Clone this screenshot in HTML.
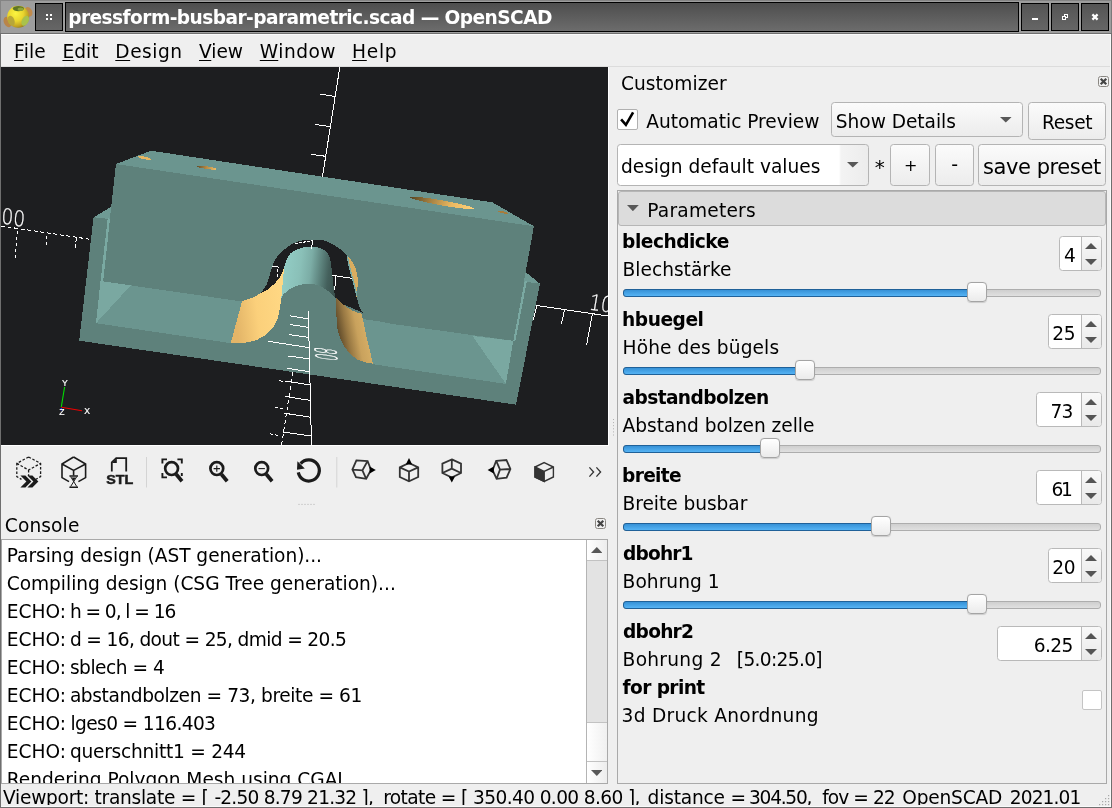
<!DOCTYPE html>
<html lang="de"><head><meta charset="utf-8"><title>pressform-busbar-parametric.scad — OpenSCAD</title>
<style>
*{box-sizing:border-box;margin:0;padding:0}
html,body{width:1112px;height:808px;overflow:hidden;background:#efefef}
body{font-family:"DejaVu Sans","Liberation Sans",sans-serif;font-size:18.6px;color:#000}
#w{position:relative;width:1112px;height:808px;overflow:hidden;background:#efefef}
#w div,#w svg{position:absolute}
.t{white-space:pre;line-height:28px;height:28px}
.t u{text-decoration-thickness:1.4px;text-underline-offset:2.2px}
.gl{left:1px;top:67px}
.tx{left:0;top:0;width:1112px;height:808px;will-change:transform}
.tx2{will-change:transform}
.tb{left:0;top:0;width:1112px;height:34px;background:#9e9e9e;border-top:1px solid #848484;border-left:1px solid #848484;border-right:1px solid #7a7a7a;border-bottom:1.4px solid #707070}
.wb{border:1px solid #000;background:linear-gradient(#545454,#666)}
.btn{border:1px solid #b4b4b4;border-radius:3.5px;background:linear-gradient(#fbfbfb,#ececec)}
.sp{border:1px solid #b9b9b9;border-radius:3.5px;background:#fff;height:35.2px}
.sp i{position:absolute;right:0;top:0;bottom:0;width:20.2px;border-left:1px solid #b9b9b9;background:linear-gradient(#f9f9f9,#e9e9e9);border-radius:0 3px 3px 0}
.sp i:before,.sp i:after{content:"";position:absolute;left:3.1px;border:6.5px solid transparent}
.sp i:before{top:6.1px;border-bottom:6.5px solid #555;border-top-width:0}
.sp i:after{bottom:5.1px;border-top:6.5px solid #555;border-bottom-width:0}
.gr{height:7.6px;border:1px solid #adadad;border-radius:3px;background:linear-gradient(#cfcfcf,#e0e0e0)}
.gb{height:7.8px;border:1px solid #1f6199;border-radius:3px;background:linear-gradient(#3691d6,#55b3f4)}
.hd{width:20px;height:20px;border:1px solid #a4a4a4;border-radius:4px;background:linear-gradient(#fff,#ebebeb);box-shadow:0 .5px 1px rgba(0,0,0,.15)}
.cl{width:11px;height:11px;border:1px solid #8a8782;border-radius:2.5px;background:#f1f1f1}
</style></head>
<body><div id="w">
<div class="tb"></div><svg style="left:3px;top:3px" width="31" height="28" viewBox="3 3 31 28"><defs><radialGradient id="ig" cx=".38" cy=".35" r=".7"><stop offset="0" stop-color="#fbf440"/><stop offset=".5" stop-color="#ead62e"/><stop offset=".85" stop-color="#bfa022"/><stop offset="1" stop-color="#8c7a1a"/></radialGradient></defs><ellipse cx="28.6" cy="11.8" rx="3.6" ry="5" transform="rotate(-25 28.6 11.8)" fill="#c08a4c"/><ellipse cx="7.6" cy="22" rx="3.7" ry="5.4" transform="rotate(-25 7.6 22)" fill="#b98548"/><circle cx="18.2" cy="16.8" r="11" fill="url(#ig)"/><ellipse cx="18.4" cy="8.6" rx="5.6" ry="2.7" fill="#5f7524"/><ellipse cx="20.6" cy="9.2" rx="3" ry="1.7" fill="#8ea53a"/><ellipse cx="25.2" cy="20.8" rx="3.3" ry="5.4" transform="rotate(28 25.2 20.8)" fill="#a9c24c"/><ellipse cx="11.2" cy="20.8" rx="3.3" ry="5.2" transform="rotate(-20 11.2 20.8)" fill="#b7a63a"/></svg><div class="wb" style="left:35px;top:3px;width:28px;height:28px"></div><div style="left:46px;top:14px;width:2px;height:2px;background:#fff"></div><div style="left:50px;top:14px;width:2px;height:2px;background:#fff"></div><div style="left:46px;top:18px;width:2px;height:2px;background:#fff"></div><div style="left:50px;top:18px;width:2px;height:2px;background:#fff"></div><div class="wb" style="left:65px;top:2px;width:954px;height:30px;background:linear-gradient(#4e4e4e,#6c6c6c)"></div><div class="wb" style="left:1021px;top:3px;width:28px;height:28px"></div><div class="wb" style="left:1051px;top:3px;width:28px;height:28px"></div><div class="wb" style="left:1081px;top:3px;width:28px;height:28px"></div><div style="left:1032px;top:18px;width:6px;height:2px;background:#fff"></div><svg style="left:1061px;top:13px" width="8" height="8" viewBox="0 0 8 8" shape-rendering="crispEdges"><rect x="3.5" y="1.5" width="3" height="3" fill="none" stroke="#fff" stroke-width="1"/><rect x="1.5" y="3.5" width="3" height="3" fill="#5d5d5d" stroke="#fff" stroke-width="1"/></svg><svg style="left:1091px;top:13px" width="8" height="8" viewBox="0 0 8 8"><path d="M1.4 1.4L6.6 6.6M6.6 1.4L1.4 6.6" stroke="#fff" stroke-width="2.2"/></svg>
<div style="left:1px;top:66px;width:1110px;height:1px;background:#dcdcdc"></div>
<div style="left:0;top:66.5px;width:609px;height:379px;background:#fff"></div>
<svg class="gl" viewBox="1 67 607 377.5" width="607" height="377.5" shape-rendering="crispEdges">
<defs><linearGradient id="gy" x1="236" y1="322" x2="285" y2="316" gradientUnits="userSpaceOnUse"><stop offset="0" stop-color="#e3b568"/><stop offset=".45" stop-color="#fbd07b"/><stop offset="1" stop-color="#ffd884"/></linearGradient><linearGradient id="gc" x1="284" y1="270" x2="336" y2="276" gradientUnits="userSpaceOnUse"><stop offset="0" stop-color="#92ccc4"/><stop offset=".3" stop-color="#8ac0b8"/><stop offset=".5" stop-color="#7cada6"/><stop offset=".68" stop-color="#5f8680"/><stop offset=".85" stop-color="#44605c"/><stop offset="1" stop-color="#3a524e"/></linearGradient><linearGradient id="gb" x1="337" y1="330" x2="368" y2="324" gradientUnits="userSpaceOnUse"><stop offset="0" stop-color="#5c4829"/><stop offset=".3" stop-color="#987843"/><stop offset=".62" stop-color="#c9a25d"/><stop offset="1" stop-color="#d8b067"/></linearGradient><linearGradient id="gh" x1="410" y1="197" x2="474" y2="208" gradientUnits="userSpaceOnUse"><stop offset="0" stop-color="#54421f"/><stop offset=".3" stop-color="#a07c3f"/><stop offset=".65" stop-color="#eab962"/><stop offset="1" stop-color="#ffd27a"/></linearGradient><linearGradient id="gh2" x1="196" y1="166" x2="217" y2="169" gradientUnits="userSpaceOnUse"><stop offset="0" stop-color="#5a4522"/><stop offset=".5" stop-color="#b58b46"/><stop offset="1" stop-color="#f2c068"/></linearGradient></defs>
<rect x="0" y="60" width="620" height="400" fill="#1d1e20"/>
<polygon fill="#5e817b" points="93.6,216.9 110.0,218.3 525.0,281.3 539.9,283.7 516.0,404.7 79.2,340.7"/>
<polygon fill="#6f9a94" points="93.6,217.3 111.6,206.6 114.0,214.0 112.0,219.2 108.0,218.8"/>
<polygon fill="#6f9a94" points="526.3,272.6 539.9,283.7 524.6,281.6 518.0,281.0 520.0,272.0"/>
<polygon fill="#6b958f" points="100.5,281.0 513.3,340.8 505.9,383.9 96.0,323.2"/>
<polygon fill="#7aa8a1" points="100.5,281.0 130.9,285.3 96.0,323.2"/>
<polygon fill="#7aa8a1" points="472.5,336.0 513.3,340.8 505.9,383.9"/>
<polygon fill="#6b958f" points="116.0,164.0 151.0,150.7 492.5,202.4 533.9,226.3"/>
<ellipse cx="442" cy="202.9" rx="32.6" ry="2.5" transform="rotate(10.1 442 202.9)" fill="url(#gh)"/>
<ellipse cx="144.5" cy="158" rx="6.5" ry="1.3" transform="rotate(12 144.5 158)" fill="#e9b862"/>
<ellipse cx="206.5" cy="167.6" rx="10" ry="1.4" transform="rotate(9 206.5 167.6)" fill="url(#gh2)"/>
<ellipse cx="502.8" cy="212.2" rx="5.3" ry="1" transform="rotate(14 502.8 212.2)" fill="#a67c3c"/>
<polygon fill="#1d1e20" points="259.1,294.0 260.8,292.5 262.3,290.9 263.6,289.2 264.8,287.6 265.7,286.2 266.4,285.0 267.0,283.6 267.7,281.9 268.4,279.7 269.1,277.1 269.8,274.5 270.5,272.0 271.2,269.7 271.9,267.5 272.6,265.4 273.4,263.4 274.3,261.5 275.2,259.8 276.3,258.0 277.6,256.3 279.1,254.5 280.9,252.7 282.8,250.9 284.7,249.2 286.7,247.6 288.7,246.1 290.9,244.7 293.3,243.5 296.0,242.4 298.8,241.4 301.8,240.6 304.7,240.0 307.6,239.6 310.5,239.5 313.3,239.5 316.0,239.6 318.5,239.7 320.8,240.0 323.0,240.3 325.0,240.7 326.7,241.2 328.1,241.8 329.4,242.5 331.1,243.4 333.2,244.6 335.5,245.9 337.9,247.4 340.0,248.9 341.9,250.4 343.6,251.9 345.2,253.4 346.7,255.0 348.2,256.6 349.7,258.3 351.1,260.0 352.3,261.7 353.3,263.3 354.2,264.9 354.9,266.6 355.6,268.4 356.2,270.5 356.8,272.8 357.2,275.2 357.6,277.3 357.8,279.2 357.9,280.9 357.9,282.5 357.9,284.0 357.8,285.3 357.6,286.4 357.5,287.4 357.3,288.5 357.2,289.5 357.0,290.5 356.9,291.6 356.9,293.0 357.0,294.9 357.2,297.3 357.5,299.6 357.9,301.8 358.3,303.7 358.9,305.4 359.4,307.0 360.1,308.5 360.8,309.8 361.5,310.9 362.3,311.9 363.4,313.0 340.0,303.0 300.0,290.0"/>
<polygon fill="url(#gy)" points="242.1,301.1 250.6,298.3 259.1,294.0 267.7,289.8 274.8,283.4 280.5,276.3 284.0,268.4 282.6,284.8 281.2,299.0 279.8,309.0 277.6,318.9 273.4,327.5 266.3,334.6 256.3,340.3 243.5,343.1 230.7,343.4"/>
<polygon fill="url(#gc)" points="284.0,268.4 284.5,266.4 285.2,263.4 286.2,260.6 287.3,258.1 288.7,255.6 290.4,253.5 292.4,251.8 294.8,250.4 297.5,249.2 300.7,248.1 304.2,247.3 307.5,246.7 310.6,246.6 313.5,246.8 316.0,247.1 318.0,247.5 319.5,248.0 321.0,248.6 322.4,249.1 323.7,249.7 325.0,250.6 326.3,251.8 327.5,253.3 328.6,255.0 329.4,256.6 330.0,258.3 330.6,261.0 331.2,265.1 331.7,270.1 332.2,275.0 332.8,279.7 333.3,284.3 333.9,288.5 334.5,292.5 335.2,296.0 335.6,298.5 335.6,298.5 334.7,297.4 333.4,295.9 332.0,294.4 330.8,293.2 329.5,292.1 328.0,290.9 326.2,289.6 324.0,288.2 321.7,286.9 319.0,285.8 316.1,284.8 313.2,284.1 310.4,283.8 307.5,283.8 304.7,284.1 301.8,284.6 298.9,285.3 296.1,286.2 293.6,287.2 291.2,288.4 289.0,289.8 286.9,291.4 284.9,293.1 283.3,294.7 282.3,296.3 281.6,297.9 281.2,299.0"/>
<polygon fill="url(#gb)" points="335.5,296.9 339.0,300.8 343.0,304.3 348.0,308.0 353.3,311.0 357.5,312.5 361.2,313.2 363.5,322.0 365.7,333.2 369.7,350.0 373.0,363.7 365.0,362.3 358.2,360.0 352.5,356.0 347.8,351.0 343.6,345.5 340.4,339.2 338.0,331.5 336.7,324.3 336.2,304.3"/>
<polygon fill="#5e817b" points="230.7,343.4 243.5,343.1 256.3,340.3 266.3,334.6 273.4,327.5 277.6,318.9 279.8,309.0 281.2,299.0 281.6,297.9 282.3,296.3 283.3,294.7 284.9,293.1 286.9,291.4 289.0,289.8 291.2,288.4 293.6,287.2 296.1,286.2 298.9,285.3 301.8,284.6 304.7,284.1 307.5,283.8 310.4,283.8 313.2,284.1 316.1,284.8 319.0,285.8 321.7,286.9 324.0,288.2 326.2,289.6 328.0,290.9 329.5,292.1 330.8,293.2 332.0,294.4 333.4,295.9 334.7,297.4 335.6,298.5 336.2,304.3 336.7,324.3 338.0,331.5 340.4,339.2 343.6,345.5 347.8,351.0 352.5,356.0 358.2,360.0 365.0,362.3 373.0,363.7 373.0,375.0 230.0,352.0"/>
<polygon fill="#d9ad60" points="346.7,254.5 353.0,261.7 356.6,268.4 358.6,277.3 358.9,284.0 358.3,288.5 357.5,297.0 356.7,297.4 354.5,288.5 352.3,279.5 349.2,268.4"/>
<polyline fill="none" stroke="#78a9a2" stroke-width="1.4" points="347.2,256.0 349.8,268.4 352.9,279.5 355.1,288.5 357.0,296.0"/>
<polygon fill="#5e817b" points="116.0,164.0 533.9,226.3 513.3,340.8 390.0,323.6 388.2,323.2 385.6,322.7 382.7,322.0 380.0,321.3 377.4,320.4 374.8,319.5 372.3,318.4 370.0,317.4 368.0,316.3 366.3,315.2 364.7,314.1 363.4,313.0 362.3,311.9 361.5,310.9 360.8,309.8 360.1,308.5 359.4,307.0 358.9,305.4 358.3,303.7 357.9,301.8 357.5,299.6 357.2,297.3 357.0,294.9 356.9,293.0 356.9,291.6 357.0,290.5 357.2,289.5 357.3,288.5 357.5,287.4 357.6,286.4 357.8,285.3 357.9,284.0 357.9,282.5 357.9,280.9 357.8,279.2 357.6,277.3 357.2,275.2 356.8,272.8 356.2,270.5 355.6,268.4 354.9,266.6 354.2,264.9 353.3,263.3 352.3,261.7 351.1,260.0 349.7,258.3 348.2,256.6 346.7,255.0 345.2,253.4 343.6,251.9 341.9,250.4 340.0,248.9 337.9,247.4 335.5,245.9 333.2,244.6 331.1,243.4 329.4,242.5 328.1,241.8 326.7,241.2 325.0,240.7 323.0,240.3 320.8,240.0 318.5,239.7 316.0,239.6 313.3,239.5 310.5,239.5 307.6,239.6 304.7,240.0 301.8,240.6 298.8,241.4 296.0,242.4 293.3,243.5 290.9,244.7 288.7,246.1 286.7,247.6 284.7,249.2 282.8,250.9 280.9,252.7 279.1,254.5 277.6,256.3 276.3,258.0 275.2,259.8 274.3,261.5 273.4,263.4 272.6,265.4 271.9,267.5 271.2,269.7 270.5,272.0 269.8,274.5 269.1,277.1 268.4,279.7 267.7,281.9 267.0,283.6 266.4,285.0 265.7,286.2 264.8,287.6 263.6,289.2 262.3,290.9 260.8,292.5 259.1,294.0 257.2,295.3 255.0,296.4 252.8,297.4 250.6,298.3 248.3,299.2 245.8,300.0 243.6,300.6 242.1,301.1 103.0,281.0"/>
<polygon fill="#7aa9a2" points="107.7,218.4 110.0,218.7 103.2,281.2 100.6,281.0"/>
<polygon fill="#7aa9a2" points="524.6,281.2 526.8,281.4 515.4,341.0 513.3,340.8"/>
<line x1="340.0" y1="66.0" x2="322.4" y2="177.0" stroke="#fff" stroke-width="1" fill="none" />
<line x1="319.7" y1="93.9" x2="335.0" y2="96.5" stroke="#fff" stroke-width="1" fill="none" />
<line x1="315.0" y1="124.4" x2="330.4" y2="126.7" stroke="#fff" stroke-width="1" fill="none" />
<line x1="310.8" y1="154.4" x2="325.8" y2="156.3" stroke="#fff" stroke-width="1" fill="none" />
<line x1="295.4" y1="243.6" x2="312.5" y2="240.6" stroke="#fff" stroke-width="1" fill="none" stroke-dasharray="2.5 1.5"/>
<line x1="312.6" y1="240.2" x2="311.5" y2="249.4" stroke="#fff" stroke-width="1" fill="none" />
<line x1="272.3" y1="266.3" x2="279.3" y2="267.2" stroke="#fff" stroke-width="1" fill="none" />
<line x1="277.6" y1="268.6" x2="277.2" y2="279.2" stroke="#fff" stroke-width="1" fill="none" stroke-dasharray="3 2"/>
<line x1="332.5" y1="275.3" x2="351.6" y2="278.3" stroke="#fff" stroke-width="1" fill="none" />
<line x1="335.6" y1="276.0" x2="334.8" y2="289.6" stroke="#fff" stroke-width="1" fill="none" />
<line x1="308.3" y1="311.0" x2="311.5" y2="445.0" stroke="#fff" stroke-width="1" fill="none" />
<line x1="290.2" y1="315.9" x2="308.3" y2="318.9" stroke="#fff" stroke-width="1" fill="none" />
<line x1="290.2" y1="324.5" x2="308.6" y2="327.4" stroke="#fff" stroke-width="1" fill="none" />
<line x1="289.1" y1="334.6" x2="308.8" y2="337.4" stroke="#fff" stroke-width="1" fill="none" />
<line x1="268.2" y1="341.3" x2="309.2" y2="347.6" stroke="#fff" stroke-width="1" fill="none" />
<line x1="288.0" y1="356.0" x2="309.2" y2="358.8" stroke="#fff" stroke-width="1" fill="none" />
<line x1="287.2" y1="368.2" x2="309.5" y2="371.8" stroke="#fff" stroke-width="1" fill="none" />
<line x1="285.4" y1="381.2" x2="309.8" y2="384.8" stroke="#fff" stroke-width="1" fill="none" />
<line x1="285.4" y1="396.4" x2="310.1" y2="400.4" stroke="#fff" stroke-width="1" fill="none" />
<line x1="284.2" y1="413.2" x2="310.6" y2="417.2" stroke="#fff" stroke-width="1" fill="none" />
<line x1="282.7" y1="431.9" x2="311.0" y2="436.0" stroke="#fff" stroke-width="1" fill="none" />
<line x1="292.8" y1="372.0" x2="281.6" y2="445.0" stroke="#fff" stroke-width="1" fill="none" stroke-dasharray="4 3"/>
<line x1="279.0" y1="380.3" x2="282.5" y2="381.6" stroke="#fff" stroke-width="1" fill="none" />
<line x1="275.2" y1="407.6" x2="283.6" y2="408.8" stroke="#fff" stroke-width="1" fill="none" stroke-dasharray="3 2"/>
<line x1="270.0" y1="433.8" x2="279.0" y2="435.6" stroke="#fff" stroke-width="1" fill="none" stroke-dasharray="3 2"/>
<line x1="1.0" y1="226.0" x2="89.5" y2="239.2" stroke="#fff" stroke-width="1" fill="none" stroke-dasharray="4 2.6"/>
<line x1="17.4" y1="231.0" x2="15.2" y2="258.0" stroke="#fff" stroke-width="1" fill="none" stroke-dasharray="3.4 2.6"/>
<line x1="47.0" y1="235.6" x2="46.0" y2="245.6" stroke="#fff" stroke-width="1" fill="none" stroke-dasharray="3.4 2.6"/>
<line x1="76.2" y1="238.4" x2="75.4" y2="249.4" stroke="#fff" stroke-width="1" fill="none" stroke-dasharray="3.4 2.6"/>
<line x1="536.9" y1="305.5" x2="608.0" y2="316.0" stroke="#fff" stroke-width="1" fill="none" />
<line x1="536.9" y1="305.5" x2="533.2" y2="320.0" stroke="#fff" stroke-width="1" fill="none" />
<line x1="564.6" y1="309.8" x2="561.4" y2="324.0" stroke="#fff" stroke-width="1" fill="none" />
<line x1="592.4" y1="314.0" x2="586.6" y2="345.0" stroke="#fff" stroke-width="1" fill="none" />
<g shape-rendering="auto"><line x1="61.3" y1="407" x2="64.6" y2="387" stroke="#00e000" stroke-width="1.1"/><line x1="61.3" y1="407.2" x2="82" y2="410.8" stroke="#f00000" stroke-width="1.1"/><rect x="60.6" y="408" width="1.4" height="2.4" fill="#1030ff"/></g>
</svg>
<svg class="gl tx2" viewBox="1 67 607 377.5" width="607" height="377.5"><g font-family="'DejaVu Sans Light','DejaVu Sans',sans-serif" font-weight="200" fill="#fff" stroke="#fff" stroke-width=".25"><text x="0" y="0" font-size="21.4" transform="matrix(0.93 0.14 -0.08 1 -10.8 221.6)" textLength="38" lengthAdjust="spacingAndGlyphs">100</text><text x="0" y="0" font-size="21.4" transform="matrix(0.93 0.12 -0.17 1 588.2 309.6)" textLength="25" lengthAdjust="spacingAndGlyphs">10</text><text x="0" y="0" font-size="15" transform="matrix(0.15 1 -2 -0.275 314.2 346.4)" textLength="12" lengthAdjust="spacingAndGlyphs">80</text></g><g font-family="'Liberation Sans',sans-serif" font-size="8.6" fill="#fff" stroke="#fff" stroke-width=".2"><text x="62" y="386.2">Y</text><text x="84.2" y="414.2">X</text><text x="59.2" y="415">Z</text></g></svg>
<svg class="tx2" style="left:0;top:445px" width="610" height="60" viewBox="0 445 610 60" fill="none" stroke="#1b1b1b" stroke-linecap="butt" stroke-linejoin="miter"><path d="M28.6 457L40.6 463.4V476.6L35 479.8M28.6 457L16.8 463.4V476.6L21.5 479.4M16.8 463.4L28.6 470L40.6 463.4M28.6 470V476" stroke-width="1.3" stroke-dasharray="2.6 1.7"/><path d="M20.4 475.6h5l6 6-6 6h-5l6-6zM27.4 475.6h5l6 6-6 6h-5l6-6z" fill="#1b1b1b" stroke="none"/><path d="M73.6 457L85.6 464V477.6L78.4 481.6M73.6 457L62 464V477.6L69 481.6M62 464L73.6 470.4L85.6 464M73.6 470.4V475.4" stroke-width="1.6"/><path d="M69.4 476h8.6M69.4 487.2h8.6" stroke-width="1.5"/><path d="M70.6 476.6L76.8 486.6M76.8 476.6L70.6 486.6" stroke-width="1"/><path d="M71.6 477.6h4.2l-2.1 3.4z" fill="#1b1b1b" stroke="none"/><path d="M111.8 471.4V462.4L116.2 458.2H126.2V471.4" stroke-width="1.8"/><path d="M116.8 458.6V463h-4.6z" fill="#1b1b1b" stroke="none"/><text x="106.2" y="484.3" font-family="'Liberation Sans','DejaVu Sans',sans-serif" font-weight="700" font-size="12.4" fill="#1b1b1b" stroke="#1b1b1b" stroke-width=".5" textLength="27" lengthAdjust="spacingAndGlyphs">STL</text><path d="M146.5 457V487.5" stroke="#d4d4d4" stroke-width="1"/><path d="M162.4 463.4V459.4H167M177.4 459.4H181.8V463.4M162.4 473V477.4H167M181.8 473V476" stroke-width="1.9"/><circle cx="171.6" cy="468.6" r="6.4" stroke-width="2.7"/><path d="M176.2 474.2L182.0 481.2" stroke-width="3.7"/><circle cx="216.8" cy="468.6" r="6.4" stroke-width="2.7"/><path d="M221.4 474.2L227.2 481.2" stroke-width="3.7"/><path d="M213.6 468.6h6.4M216.8 465.4v6.4" stroke-width="1.1"/><circle cx="261.7" cy="468.6" r="6.4" stroke-width="2.7"/><path d="M266.3 474.2L272.1 481.2" stroke-width="3.7"/><path d="M258.5 468.6h6.4" stroke-width="1.1"/><path d="M300.6 463.6A10.6 10.6 0 1 1 298.3 472.4" stroke-width="3.2"/><path d="M297.4 461.2L304.8 468.6L297 469.8z" fill="#1b1b1b" stroke="none"/><path d="M336.8 457V487.5" stroke="#d4d4d4" stroke-width="1"/><g stroke="#333" stroke-width="1.8"><path d="M356.4 460.4L367.6 461L371 470L366.2 478.8L356 477.2L352.4 469.6zM352.4 469.6L362.4 470.4L367.6 461M362.4 470.4L366.2 478.8"/><path d="M369.6 466.6L375.8 470L369.6 473.4z" fill="#000" stroke="none"/></g><g stroke="#333" stroke-width="1.8"><path d="M409 463L418.2 467.4V477L409 481.2L399.8 477V467.4zM399.8 467.4L409 471.6L418.2 467.4M409 471.6V481.2"/><path d="M405.8 464.4L409 458L412.2 464.4z" fill="#000" stroke="none"/></g><g stroke="#333" stroke-width="1.8"><path d="M451.8 459.4L461 463.6V473L451.8 477.6L442.4 473V463.6zM451.8 459.4V468.6L442.4 473M451.8 468.6L461 473"/><path d="M448.6 476.4L451.8 482.4L455 476.4z" fill="#000" stroke="none"/></g><g stroke="#333" stroke-width="1.8"><path d="M496.2 460.8L506.4 460L510.4 469L506.6 477.6L496.6 478.8L492.6 470.2zM496.2 460.8L500 469.6L510.4 469M500 469.6L496.6 478.8"/><path d="M493.8 466.6L487.6 470L493.8 473.4z" fill="#000" stroke="none"/></g><g stroke="#333" stroke-width="1.4"><path d="M544.2 462.6L553.4 467V477L544.2 481.4L535 477V467z"/><path d="M535 467L544.2 471.4V481.4L535 477z" fill="#333"/><path d="M544.2 471.4L553.4 467"/></g><path d="M589.4 467.4L593.6 472L589.4 476.6M596.4 467.4L600.6 472L596.4 476.6" stroke="#333" stroke-width="1.3"/><path d="M298.5 504.4H315" stroke="#b0b0b0" stroke-width="1" stroke-dasharray="1 2"/></svg>
<svg style="left:612px;top:417px" width="3" height="20"><path d="M1.5 2V20" stroke="#b0b0b0" stroke-width="1" stroke-dasharray="1 2.1"/></svg>
<div class="cl" style="left:595.0px;top:518.0px"><svg style="left:0;top:0" width="9" height="9" viewBox="0 0 9 9"><path d="M1.7 1.7L7.3 7.3M7.3 1.7L1.7 7.3" stroke="#454545" stroke-width="2.2" fill="none"/></svg></div>
<div style="left:1px;top:539px;width:607px;height:245px;border:1px solid #a9a9a9;background:#fff"></div>
<div style="left:586.4px;top:540px;width:20.6px;height:243px;border-left:1px solid #b4b4b4;background:#e3e3e3"></div>
<div style="left:587.4px;top:540px;width:19.6px;height:20.6px;border-bottom:1px solid #c2c2c2;background:linear-gradient(90deg,#fff,#ededed)"></div>
<div style="left:587.4px;top:721.5px;width:19.6px;height:40.5px;border-top:1px solid #c2c2c2;border-bottom:1px solid #c2c2c2;background:linear-gradient(90deg,#fff,#f0f0f0)"></div>
<div style="left:587.4px;top:762px;width:19.6px;height:21px;background:linear-gradient(90deg,#fff,#ededed)"></div>
<svg style="left:590.8px;top:546.8px" width="11.6" height="6.0" viewBox="0 0 11.6 6.0"><polygon points="0,6.0 11.6,6.0 5.8,0" fill="#585858"/></svg>
<svg style="left:590.7px;top:769.5px" width="11.6" height="6.0" viewBox="0 0 11.6 6.0"><polygon points="0,0 11.6,0 5.8,6.0" fill="#585858"/></svg>
<div class="tx" style="clip-path:inset(540px 526px 25px 2px)"><div class="t" style="left:6.70px;top:542px;letter-spacing:-0.036px;">Parsing design (AST generation)...</div><div class="t" style="left:6.70px;top:570px;letter-spacing:-0.022px;">Compiling design (CSG Tree generation)...</div><div class="t" style="left:6.70px;top:598px;letter-spacing:-0.005px;">ECHO:</div><div class="t" style="left:69.90px;top:598px;letter-spacing:-1.053px;">h = 0, l = 16</div><div class="t" style="left:6.70px;top:626px;letter-spacing:-0.005px;">ECHO:</div><div class="t" style="left:69.90px;top:626px;letter-spacing:-0.640px;">d = 16, dout = 25, dmid = 20.5</div><div class="t" style="left:6.70px;top:654px;letter-spacing:-0.005px;">ECHO:</div><div class="t" style="left:69.90px;top:654px;letter-spacing:-0.489px;">sblech = 4</div><div class="t" style="left:6.70px;top:682px;letter-spacing:-0.005px;">ECHO:</div><div class="t" style="left:69.90px;top:682px;letter-spacing:-0.412px;">abstandbolzen = 73, breite = 61</div><div class="t" style="left:6.70px;top:710px;letter-spacing:-0.005px;">ECHO:</div><div class="t" style="left:70.60px;top:710px;letter-spacing:-0.635px;">lges0 = 116.403</div><div class="t" style="left:6.70px;top:738px;letter-spacing:-0.005px;">ECHO:</div><div class="t" style="left:69.90px;top:738px;letter-spacing:-0.258px;">querschnitt1 = 244</div><div class="t" style="left:6.70px;top:766px;letter-spacing:-0.009px;">Rendering Polygon Mesh using CGAL...</div></div>
<div class="tx" style="clip-path:inset(784px 1px 3px 1px)"><div class="t" style="left:3.10px;top:784px;letter-spacing:-0.291px;">Viewport: translate = [</div><div class="t" style="left:214.40px;top:784px;letter-spacing:-0.785px;">-2.50 8.79 21.32 ],</div><div class="t" style="left:383.20px;top:784px;letter-spacing:-0.625px;">rotate = [</div><div class="t" style="left:473.10px;top:784px;letter-spacing:-0.630px;">350.40 0.00 8.60 ],</div><div class="t" style="left:647.60px;top:784px;letter-spacing:-0.200px;">distance =</div><div class="t" style="left:749.00px;top:784px;letter-spacing:-1.260px;">304.50,</div><div class="t" style="left:822.20px;top:784px;letter-spacing:-0.937px;">fov = 22</div><div class="t" style="left:902.30px;top:784px;letter-spacing:-0.210px;">OpenSCAD</div><div class="t" style="left:1009.80px;top:784px;letter-spacing:-0.893px;">2021.01</div></div>
<div class="cl" style="left:1097.8px;top:76.4px"><svg style="left:0;top:0" width="9" height="9" viewBox="0 0 9 9"><path d="M1.7 1.7L7.3 7.3M7.3 1.7L1.7 7.3" stroke="#454545" stroke-width="2.2" fill="none"/></svg></div>
<div style="left:617.3px;top:109.2px;width:20.4px;height:20.4px;border:1px solid #b0b0b0;border-radius:2px;background:#fff"></div>
<svg style="left:617.3px;top:109.2px" width="21" height="21" viewBox="0 0 21 21"><path d="M4.1 10.3L8.9 15.8L16.1 3.4" fill="none" stroke="#000" stroke-width="2.6"/></svg>
<div class="btn" style="left:831px;top:102.2px;width:191.8px;height:35.2px"></div>
<svg style="left:1000.4px;top:117.0px" width="11.6" height="5.6" viewBox="0 0 11.6 5.6"><polygon points="0,0 11.6,0 5.8,5.6" fill="#585858"/></svg>
<div class="btn" style="left:1027.5px;top:101.5px;width:78.8px;height:38px"></div>
<div class="btn" style="left:617.3px;top:144.4px;width:252.2px;height:41.2px;background:linear-gradient(90deg,#fff 0,#fff 221px,#f3f3f3 223px,#ececec)"></div>
<svg style="left:847.0px;top:162.2px" width="11.6" height="5.6" viewBox="0 0 11.6 5.6"><polygon points="0,0 11.6,0 5.8,5.6" fill="#585858"/></svg>
<div class="btn" style="left:890.4px;top:144.4px;width:39.2px;height:41.2px"></div>
<div class="btn" style="left:934.5px;top:144.4px;width:39.2px;height:41.2px"></div>
<div class="btn" style="left:978.4px;top:144.4px;width:127.9px;height:41.2px"></div>
<div style="left:617.3px;top:190.4px;width:489.6px;height:593.8px;border:1px solid #a9a9a9"></div>
<div style="left:618.3px;top:191.4px;width:487.4px;height:34.4px;border:1px solid #b6b6b6;border-radius:3px;background:#dcdcdc"></div>
<svg style="left:627.3px;top:204.9px" width="11.8" height="6.2" viewBox="0 0 11.8 6.2"><polygon points="0,0 11.8,0 5.9,6.2" fill="#585858"/></svg>
<div class="gr" style="left:622.8px;top:289.0px;width:478.4px"></div>
<div class="gb" style="left:622.8px;top:289.0px;width:354.3px"></div>
<div class="hd" style="left:967.1px;top:282.0px"></div>
<div class="gr" style="left:622.8px;top:367.0px;width:478.4px"></div>
<div class="gb" style="left:622.8px;top:367.0px;width:182.1px"></div>
<div class="hd" style="left:794.9px;top:360.0px"></div>
<div class="gr" style="left:622.8px;top:445.0px;width:478.4px"></div>
<div class="gb" style="left:622.8px;top:445.0px;width:147.3px"></div>
<div class="hd" style="left:760.1px;top:438.0px"></div>
<div class="gr" style="left:622.8px;top:523.0px;width:478.4px"></div>
<div class="gb" style="left:622.8px;top:523.0px;width:258.1px"></div>
<div class="hd" style="left:870.9px;top:516.0px"></div>
<div class="gr" style="left:622.8px;top:601.0px;width:478.4px"></div>
<div class="gb" style="left:622.8px;top:601.0px;width:354.3px"></div>
<div class="hd" style="left:967.1px;top:594.0px"></div>
<div class="sp" style="left:1059.2px;top:236.2px;width:42.5px"><i></i></div>
<div class="sp" style="left:1048.4px;top:314.2px;width:53.3px"><i></i></div>
<div class="sp" style="left:1036.4px;top:392.2px;width:65.3px"><i></i></div>
<div class="sp" style="left:1036.4px;top:470.2px;width:65.3px"><i></i></div>
<div class="sp" style="left:1048.4px;top:548.2px;width:53.3px"><i></i></div>
<div class="sp" style="left:997.2px;top:626.2px;width:104.5px"><i></i></div>
<div style="left:1082.3px;top:690.4px;width:19.4px;height:19.4px;border:1px solid #c4c4c4;border-radius:2px;background:#fff"></div>
<div class="tx"><div class="t" style="left:68.20px;top:4px;letter-spacing:-0.568px;font-weight:700;color:#fff;">pressform-busbar-parametric.scad — OpenSCAD</div><div class="t" style="left:14.10px;top:38px;letter-spacing:0.175px;"><u>F</u>ile</div><div class="t" style="left:62.40px;top:38px;letter-spacing:0.028px;"><u>E</u>dit</div><div class="t" style="left:115.30px;top:38px;letter-spacing:0.517px;"><u>D</u>esign</div><div class="t" style="left:199.00px;top:38px;letter-spacing:-0.039px;"><u>V</u>iew</div><div class="t" style="left:259.80px;top:38px;letter-spacing:0.479px;"><u>W</u>indow</div><div class="t" style="left:352.10px;top:38px;letter-spacing:0.704px;"><u>H</u>elp</div><div class="t" style="left:620.90px;top:70px;letter-spacing:0.056px;">Customizer</div><div class="t" style="left:646.20px;top:108px;letter-spacing:-0.021px;">Automatic Preview</div><div class="t" style="left:835.80px;top:108px;letter-spacing:-0.041px;">Show Details</div><div class="t" style="left:1041.90px;top:109px;letter-spacing:-0.313px;">Reset</div><div class="t" style="left:620.90px;top:153px;letter-spacing:0.004px;">design default values</div><div class="t" style="left:874.70px;top:153px;font-size:20px;">*</div><div class="t" style="left:903.90px;top:152px;font-size:16px;">+</div><div class="t" style="left:951.30px;top:150px;font-size:19px;">-</div><div class="t" style="left:982.90px;top:153px;letter-spacing:-0.412px;font-size:21px;">save preset</div><div class="t" style="left:647.20px;top:197px;letter-spacing:0.229px;">Parameters</div><div class="t" style="left:622.10px;top:228px;letter-spacing:-0.503px;font-weight:700;">blechdicke</div><div class="t" style="left:622.60px;top:256px;letter-spacing:-0.009px;">Blechstärke</div><div class="t" style="left:622.10px;top:306px;letter-spacing:-0.469px;font-weight:700;">hbuegel</div><div class="t" style="left:622.60px;top:334px;letter-spacing:0.105px;">Höhe des bügels</div><div class="t" style="left:622.60px;top:384px;letter-spacing:-0.616px;font-weight:700;">abstandbolzen</div><div class="t" style="left:622.60px;top:412px;letter-spacing:-0.040px;">Abstand bolzen zelle</div><div class="t" style="left:622.10px;top:462px;letter-spacing:-0.710px;font-weight:700;">breite</div><div class="t" style="left:622.60px;top:490px;letter-spacing:-0.051px;">Breite busbar</div><div class="t" style="left:623.10px;top:540px;letter-spacing:-0.860px;font-weight:700;">dbohr1</div><div class="t" style="left:622.60px;top:568px;letter-spacing:0.045px;">Bohrung 1</div><div class="t" style="left:623.10px;top:618px;letter-spacing:-0.780px;font-weight:700;">dbohr2</div><div class="t" style="left:622.60px;top:646px;letter-spacing:0.282px;">Bohrung 2</div><div class="t" style="left:622.60px;top:674px;letter-spacing:-0.612px;font-weight:700;">for print</div><div class="t" style="left:621.60px;top:702px;letter-spacing:0.268px;">3d Druck Anordnung</div><div class="t" style="left:736.80px;top:646px;letter-spacing:-0.665px;">[5.0:25.0]</div><div class="t" style="left:1064.00px;top:242px;">4</div><div class="t" style="left:1052.30px;top:320px;letter-spacing:-0.430px;">25</div><div class="t" style="left:1050.60px;top:398px;letter-spacing:-0.830px;">73</div><div class="t" style="left:1051.50px;top:476px;letter-spacing:-2.330px;">61</div><div class="t" style="left:1052.30px;top:554px;letter-spacing:-0.430px;">20</div><div class="t" style="left:1033.80px;top:632px;letter-spacing:-0.623px;">6.25</div><div class="t" style="left:4.80px;top:512px;letter-spacing:0.121px;">Console</div></div>
<svg style="left:1098px;top:794px" width="13" height="13" fill="#a9a9a9"><rect x="10" y="1" width="1.2" height="1.2"/><rect x="10" y="4" width="1.2" height="1.2"/><rect x="7" y="4" width="1.2" height="1.2"/><rect x="10" y="7" width="1.2" height="1.2"/><rect x="7" y="7" width="1.2" height="1.2"/><rect x="4" y="7" width="1.2" height="1.2"/><rect x="10" y="10" width="1.2" height="1.2"/><rect x="7" y="10" width="1.2" height="1.2"/><rect x="4" y="10" width="1.2" height="1.2"/><rect x="1" y="10" width="1.2" height="1.2"/></svg>
<div style="left:1px;top:34px;width:1110px;height:1px;background:#fbfbfb"></div>
<div style="left:1109.6px;top:34px;width:1.2px;height:772px;background:#fafafa"></div>
<div style="left:1px;top:805.8px;width:1110px;height:1px;background:#fafafa"></div>
<div style="left:0;top:33px;width:1.1px;height:775px;background:#6f6f6f"></div>
<div style="left:1110.8px;top:33px;width:1.2px;height:775px;background:#6f6f6f"></div>
<div style="left:0;top:806.8px;width:1112px;height:1.2px;background:#6f6f6f"></div>
</div></body></html>
